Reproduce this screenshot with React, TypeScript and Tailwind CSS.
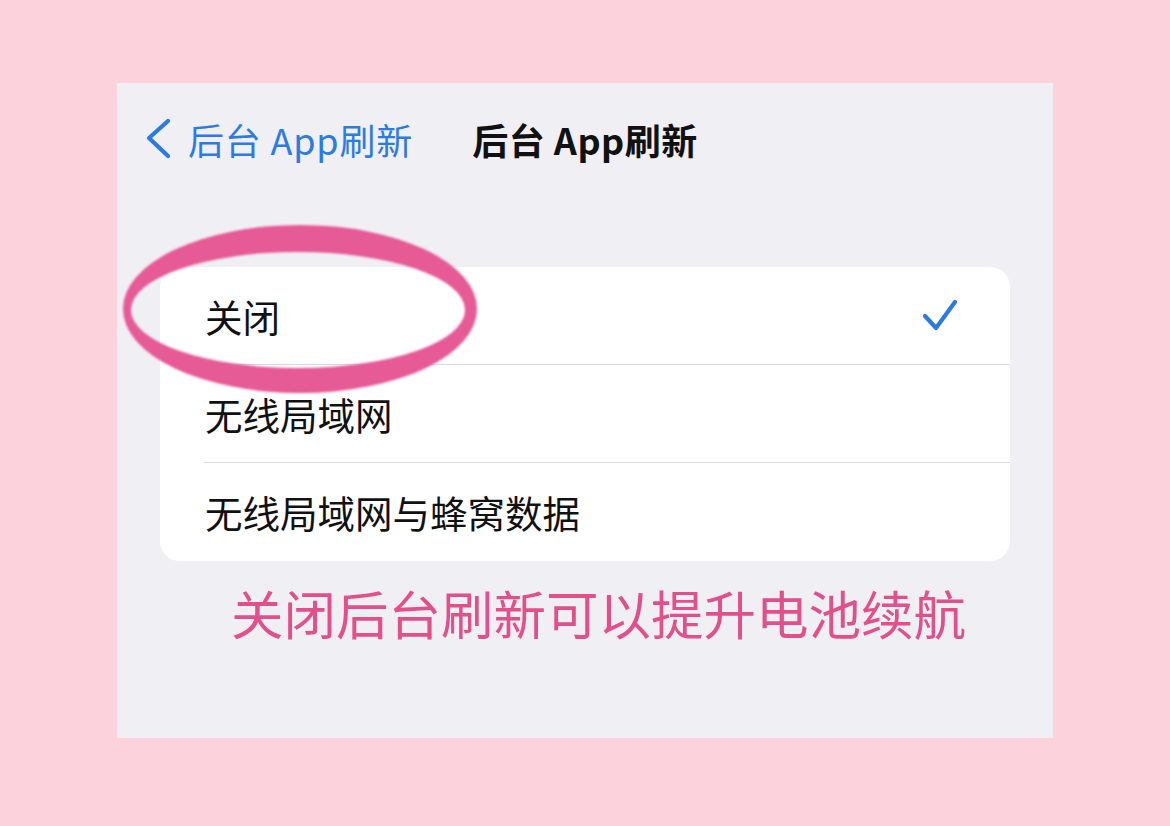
import React from "react";

const font = { fontFamily: '"Noto Sans CJK SC", "Noto Sans", sans-serif' };

function Check() {
  return (
    <svg width="36" height="34" viewBox="0 0 36 34" fill="none">
      <path d="M3 17 L14 29 L33 3" stroke="#2a7be4" strokeWidth="4.2" strokeLinecap="round" strokeLinejoin="round" />
    </svg>
  );
}

function Row({ label, checked, last }: { label: string; checked?: boolean; last?: boolean }) {
  return (
    <div className="pl-[44px]">
      <div className={`flex h-[98px] items-center justify-between pr-[52px] ${last ? "" : "border-b border-[#dcdce0]"}`}>
        <span className="pl-px text-[37.5px] leading-none text-[#111]">{label}</span>
        {checked && <Check />}
      </div>
    </div>
  );
}

export default function App() {
  return (
    <div className="min-h-[826px] w-[1170px] bg-[#fcd3dc] pl-[117px] pt-[83px]" style={font}>
      <div className="relative flex h-[655px] w-[936px] flex-col bg-[#f0eff4]">
        <div className="grid h-[118px] grid-cols-[1fr_auto_1fr] items-center pb-[6px]">
          <div className="flex items-center pl-[29px] text-[#2a7be4]">
            <svg width="26" height="42" viewBox="0 0 26 42" fill="none">
              <path d="M22 3 L3 20 L22 38" stroke="#2a7be4" strokeWidth="4.2" strokeLinecap="round" strokeLinejoin="round" />
            </svg>
            <span className="ml-[16px] text-[36px] tracking-[0.8px] leading-none">后台 App刷新</span>
          </div>
          <div className="text-[36px] tracking-[0.5px] font-bold leading-none text-[#111]">后台 App刷新</div>
          <div />
        </div>
        <div className="ml-[43px] mt-[66px] w-[850px] overflow-hidden rounded-[20px] bg-white">
          <Row label="关闭" checked />
          <Row label="无线局域网" />
          <Row label="无线局域网与蜂窝数据" last />
        </div>
        <div className="mt-[25px] pl-[114px] text-[52.5px] leading-none text-[#e2508c]">
          关闭后台刷新可以提升电池续航
        </div>
        <svg
          className="pointer-events-none absolute left-[-2px] top-[137px]"
          width="370"
          height="180"
          viewBox="0 0 370 180"
        >
          <defs>
            <filter id="soft" x="-5%" y="-5%" width="110%" height="110%">
              <feGaussianBlur stdDeviation="0.8" />
            </filter>
          </defs>
          <path
            fillRule="evenodd"
            fill="#e65a95"
            filter="url(#soft)"
            d="M8 89 A177 84 0 1 0 362 89 A177 84 0 1 0 8 89 Z M16 90 A167 58 0 1 1 350 90 A167 58 0 1 1 16 90 Z"
          />
        </svg>
      </div>
    </div>
  );
}
